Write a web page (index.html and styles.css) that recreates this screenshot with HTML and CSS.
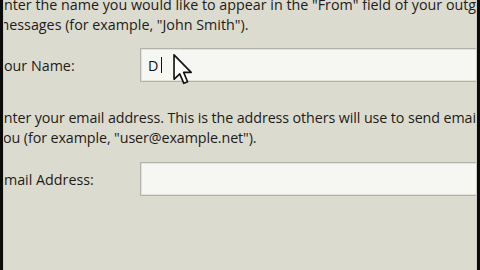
FILE: index.html
```html
<!DOCTYPE html>
<html lang="en">

<head>
    <meta charset="UTF-8">
    <meta name="viewport" content="width=device-width, initial-scale=1.0">
    <title>Account Settings</title>
    <link rel="stylesheet" href="styles.css">
</head>

<body>
    <div class="frame">
        <div class="panel">
            <div class="content">
                <p class="hint top">Enter the name you would like to appear in the "From" field of your outgoing<br>
                    messages (for example, "John Smith").</p>

                <div class="row name-row">
                    <span class="label">Your Name:</span>
                    <div class="field">
                        <span class="typed">D</span><span class="caret"></span>
                        <svg class="pointer" width="20" height="31" viewBox="0 0 12 19">
                            <path d="M0.5 0.5 L0.5 15.5 L4 12.2 L6.5 18 L8.8 17 L6.4 11.3 L11 11.3 Z"
                                fill="#fff" stroke="#111" stroke-width="1" stroke-linejoin="round" />
                        </svg>
                    </div>
                </div>

                <p class="hint mid">Enter your email address. This is the address others will use to send email to<br>
                    you (for example, "user@example.net").</p>

                <div class="row mail-row">
                    <span class="label">Email Address:</span>
                    <div class="field"></div>
                </div>
            </div>
        </div>
    </div>
</body>

</html>
```

FILE: styles.css
```css
body {
    margin: 0;
    background: #0b0b0b;
    font-family: "Open Sans", "DejaVu Sans", sans-serif;
    color: #1c1c18;
}

.frame {
    height: 270px;
    display: flex;
    padding: 0 3px 0 3px;
}

.panel {
    flex: 1;
    background: #dcdbd0;
    overflow: hidden;
    border-left: 1px solid #cfcec3;
    border-right: 1px solid #cfcec3;
}

.content {
    margin-left: -8px;
    width: 640px;
}

.hint {
    margin: 0;
    font-size: 14.3px;
    line-height: 20px;
    white-space: nowrap;
}

.top {
    margin-top: -5px;
}

.mid {
    margin-top: 26px;
    letter-spacing: -0.1px;
}

.row {
    display: flex;
    align-items: center;
}

.name-row {
    margin-top: 13px;
}

.mail-row {
    margin-top: 14px;
}

.label {
    width: 144px;
    font-size: 14.3px;
}

.field {
    position: relative;
    flex: 1;
    height: 32px;
    background: #f6f6f3;
    border: 1px solid #b3b2a8;
    box-shadow: inset 1px 1px 0 #e4e3da, inset -1px -1px 0 #e4e3da;
    display: flex;
    align-items: center;
    padding-left: 7px;
}

.typed {
    font-size: 14.3px;
    color: #111;
}

.caret {
    width: 1px;
    height: 16px;
    margin-left: 3px;
    background: #111;
}

.pointer {
    position: absolute;
    left: 32px;
    top: 5px;
}
```
